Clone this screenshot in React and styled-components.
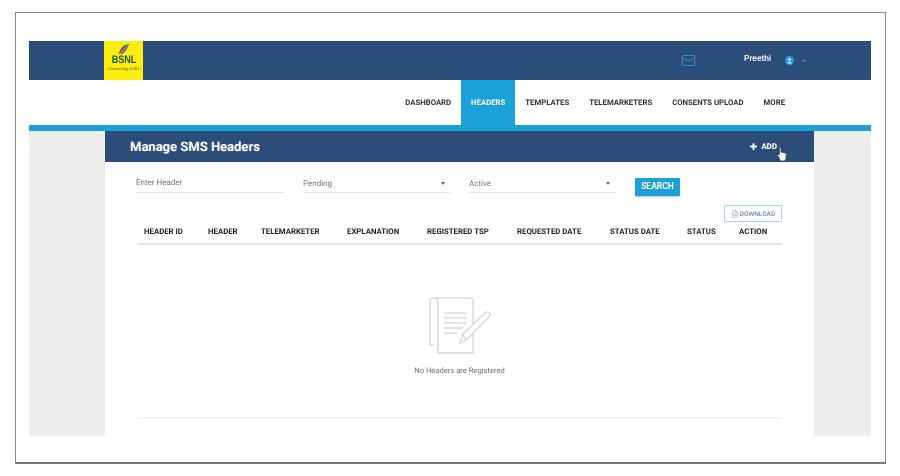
import React from 'react';
import styled, { createGlobalStyle } from 'styled-components';
import { Mail, Plus, FileText } from 'lucide-react';

const Global = createGlobalStyle`
  html, body { margin: 0; padding: 0; background: #fff; }
  * { box-sizing: border-box; }
  body {
    font-family: Roboto, "Liberation Sans", sans-serif;
    text-rendering: geometricPrecision;
  }
`;

const Frame = styled.div`
  width: 871px;
  height: 452px;
  margin: 12px 0 0 15px;
  padding: 28px 14px 0 13px;
  border: 1px solid #8a8a8a;
  border-bottom: 2px solid #777;
  filter: blur(0.4px);
`;

const TopBar = styled.header`
  display: flex;
  align-items: stretch;
  height: 39px;
  background: #2b4d7a;
  padding-left: 75px;
`;

const Logo = styled.div`
  width: 39px;
  background: #fdec10;
  display: flex;
  flex-direction: column;
  align-items: center;
  padding-top: 2px;
  color: #1c5a33;
`;

const LogoName = styled.span`
  font: bold 11px/11px "Liberation Sans", sans-serif;
  transform: scaleX(0.82);
`;

const LogoTag = styled.span`
  font: italic 4.6px/5px "Liberation Serif", serif;
  color: #5f5a10;
  white-space: nowrap;
`;

const TopRight = styled.div`
  margin-left: auto;
  display: flex;
  align-items: center;
  padding-right: 65px;
  color: #fff;
`;

const MailIcon = styled(Mail)`
  color: #2a9bd8;
  margin-right: 48px;
`;

const UserName = styled.span`
  font-size: 8.5px;
  font-weight: 500;
  margin: 0 0 3px 0;
  width: 41px;
`;

const Caret = styled.span`
  width: 0;
  height: 0;
  margin-left: 8px;
  border: 2px solid transparent;
  border-top: 2.5px solid #2a9bd8;
  border-bottom: 0;
`;

const Nav = styled.nav`
  display: flex;
  justify-content: flex-end;
  height: 45px;
  padding-right: 76px;
`;

const NavItem = styled.a`
  display: flex;
  align-items: center;
  padding: 0 10px;
  font-size: 7.75px;
  font-weight: 700;
  color: ${p => (p.$active ? '#fff' : '#333')};
  background: ${p => (p.$active ? '#1ba0d8' : 'transparent')};
`;

const Strip = styled.div`
  height: 6px;
  background: #1ba0d8;
`;

const Backdrop = styled.main`
  height: 305px;
  background: #eeeeec;
  padding-left: 76px;
`;

const Card = styled.section`
  width: 709px;
  height: 100%;
  background: #fff;
`;

const CardHead = styled.div`
  position: relative;
  display: flex;
  align-items: center;
  justify-content: space-between;
  height: 31px;
  padding: 0 37px 0 25px;
  background: #2b4d7a;
  color: #fff;
`;

const CardTitle = styled.h1`
  margin: 1px 0 0;
  font-size: 13px;
  font-weight: 700;
`;

const AddButton = styled.span`
  display: flex;
  align-items: center;
  gap: 3px;
  font-size: 8px;
  font-weight: 700;
`;

const Cursor = styled.svg`
  position: absolute;
  left: 672px;
  top: 15px;
`;

const Body = styled.div`
  padding: 0 32px;
`;

const Filters = styled.div`
  display: flex;
  align-items: flex-start;
  gap: 19px;
  padding-top: 11px;
  margin-left: -1px;
`;

const Field = styled.div`
  display: flex;
  align-items: center;
  justify-content: space-between;
  width: ${p => p.$width}px;
  height: 20px;
  padding: ${p => (p.$input ? 0 : 2)}px 5px 0 0;
  border-bottom: 1px solid #e3e3e3;
  font-size: 8px;
  color: #777;
`;

const Arrow = styled.span`
  width: 0;
  height: 0;
  border: 2.5px solid transparent;
  border-top: 3px solid #666;
  border-bottom: 0;
`;

const SearchButton = styled.button`
  width: 45px;
  height: 18px;
  margin: 5px 0 0 1px;
  padding: 0 0 3px;
  border: 0;
  border-radius: 1px;
  background: #1ba0d8;
  color: #fff;
  font: 700 8.5px Roboto, sans-serif;
  box-shadow: 0 1px 2px rgba(0, 0, 0, 0.25);
`;

const Tools = styled.div`
  display: flex;
  justify-content: flex-end;
  margin-top: 9px;
`;

const DownloadButton = styled.span`
  display: flex;
  align-items: center;
  justify-content: center;
  gap: 1px;
  width: 58px;
  height: 17px;
  border: 1.5px solid #9fd4ea;
  border-radius: 1px;
  color: #7a9ab2;
  font-size: 6.5px;
  font-weight: 700;
`;

const TableHead = styled.div`
  display: grid;
  grid-template-columns: 64px 53px 86px 80px 90px 93px 77px 52px 1fr;
  align-items: center;
  height: 23px;
  padding: 1px 0 4px 7px;
  border-bottom: 2px solid #e6e6e6;
  font-size: 7.8px;
  font-weight: 700;
  color: #222;
  white-space: nowrap;
`;

const Empty = styled.div`
  display: flex;
  flex-direction: column;
  align-items: center;
  height: 174px;
  padding-top: 50px;
  border-bottom: 2px solid #f3f3f3;
`;

const EmptyText = styled.p`
  margin: 10px 0 0;
  font-size: 7.6px;
  color: #6f6f6f;
`;

const columns = ['HEADER ID', 'HEADER', 'TELEMARKETER', 'EXPLANATION', 'REGISTERED TSP', 'REQUESTED DATE', 'STATUS DATE', 'STATUS', 'ACTION'];
const links = ['DASHBOARD', 'HEADERS', 'TEMPLATES', 'TELEMARKETERS', 'CONSENTS UPLOAD', 'MORE'];

const Emblem = () => (
  <svg width="14" height="12" viewBox="0 0 14 12">
    <path d="M2 11 C3 6 6 2 12 1 C11 5 8 9 5 11 Z" fill="#3a5fa8" />
    <path d="M2 11 C3 6 5 3 8 2 C6 5 5 8 4 11 Z" fill="#c8402a" />
    <path d="M3 11 L11 2" stroke="#fdec10" strokeWidth="0.7" />
  </svg>
);

const UserIcon = () => (
  <svg width="9" height="9" viewBox="0 0 9 9">
    <circle cx="4.5" cy="4.5" r="4.5" fill="#2a9bd8" />
    <circle cx="4.5" cy="3.4" r="1.5" fill="#cfe6f5" />
    <path d="M2 7.4 C2.6 5.6 6.4 5.6 7 7.4 Z" fill="#cfe6f5" />
  </svg>
);

const NotepadIcon = () => (
  <svg width="67" height="61" viewBox="0 0 67 61" fill="none" stroke="#dcdcdc" strokeWidth="1.6">
    <path d="M8 50 H4 V6 Q4 3 8 3 H43 Q47 3 47 6 V58 H12 V7 Q12 3 8 3" />
    <path d="M18 18 H41 M18 23 H41 M18 28 H41 M18 33 H37 M18 38 H31" />
    <path d="M34 48 L36 40 L59 18 Q62 16 63.5 18 Q65 20 63 22 L40 45 Z M37 40 L40 45" fill="#fff" />
  </svg>
);

const HandCursor = () => (
  <Cursor width="10" height="16" viewBox="0 0 10 16">
    <path
      d="M2.4 1.2 C3 0.6 4 0.9 4 1.8 V6 L8 7 C9 7.3 9.4 8 9.3 9 L8.8 13 L8 15 H3.4 L2.6 13 L0.6 9.4 C0.2 8.6 1 7.8 1.8 8.4 L2.4 9 Z"
      fill="#fff"
      stroke="#33404f"
      strokeWidth="0.8"
    />
  </Cursor>
);

export default function App() {
  return (
    <Frame>
      <Global />
      <TopBar>
        <Logo>
          <Emblem />
          <LogoName>BSNL</LogoName>
          <LogoTag>Connecting India</LogoTag>
        </Logo>
        <TopRight>
          <MailIcon size={15} strokeWidth={1.5} />
          <UserName>Preethi</UserName>
          <UserIcon />
          <Caret />
        </TopRight>
      </TopBar>
      <Nav>
        {links.map(link => (
          <NavItem key={link} $active={link === 'HEADERS'}>{link}</NavItem>
        ))}
      </Nav>
      <Strip />
      <Backdrop>
        <Card>
          <CardHead>
            <CardTitle>Manage SMS Headers</CardTitle>
            <AddButton><Plus size={9} strokeWidth={5} />ADD</AddButton>
            <HandCursor />
          </CardHead>
          <Body>
            <Filters>
              <Field $width={148} $input>Enter Header</Field>
              <Field $width={147}>Pending<Arrow /></Field>
              <Field $width={146}>Active<Arrow /></Field>
              <SearchButton>SEARCH</SearchButton>
            </Filters>
            <Tools>
              <DownloadButton><FileText size={8} strokeWidth={1.5} />DOWNLOAD</DownloadButton>
            </Tools>
            <TableHead>
              {columns.map(col => <span key={col}>{col}</span>)}
            </TableHead>
            <Empty>
              <NotepadIcon />
              <EmptyText>No Headers are Registered</EmptyText>
            </Empty>
          </Body>
        </Card>
      </Backdrop>
    </Frame>
  );
}
